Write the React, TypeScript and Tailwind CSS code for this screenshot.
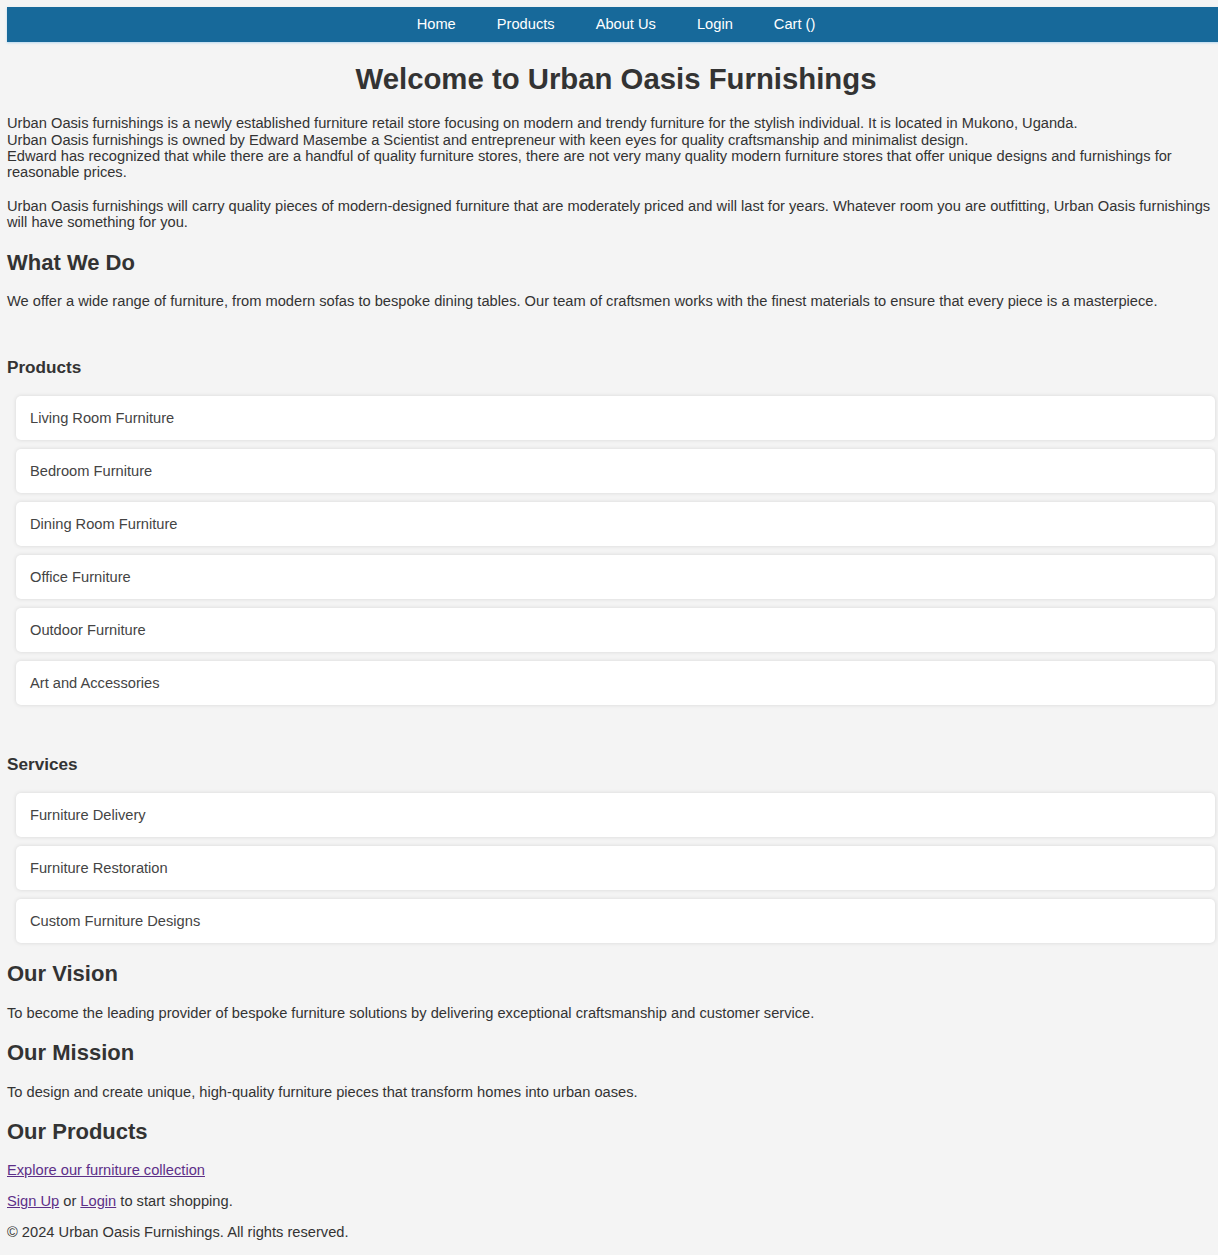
const products = [
  "Living Room Furniture",
  "Bedroom Furniture",
  "Dining Room Furniture",
  "Office Furniture",
  "Outdoor Furniture",
  "Art and Accessories",
];

const services = ["Furniture Delivery", "Furniture Restoration", "Custom Furniture Designs"];

const navLinks = ["Home", "Products", "About Us", "Login", "Cart ()"];

function Card({ label }: { label: string }) {
  return (
    <li className="ml-[9px] mr-[10px] flex h-[44px] items-center rounded-[5px] bg-white px-[14px] text-[#444] shadow-[0_0_4px_rgba(0,0,0,0.12)]">
      {label}
    </li>
  );
}

export default function App() {
  return (
    <div className="min-h-screen w-full overflow-hidden bg-[#f4f4f4] font-['Liberation_Sans',Arial,sans-serif] text-[14.67px] leading-[16.4px] text-[#333]">
      <div className="w-[1232px] px-[7px] pt-[7px] pb-[20px]">
        <nav className="flex h-[35px] items-center justify-center bg-[#17699a] shadow-[0_1px_2px_rgba(120,190,235,0.5)]">
          {navLinks.map((l) => (
            <a key={l} href="#" className="px-[20.5px] text-white">
              {l}
            </a>
          ))}
        </nav>

        <h1 className="mt-[19.6px] text-center text-[29.33px] font-bold leading-[34px]">
          Welcome to Urban Oasis Furnishings
        </h1>

        <p className="mt-[19.6px]">
          Urban Oasis furnishings is a newly established furniture retail store focusing on modern and trendy furniture for the stylish individual. It is located in Mukono, Uganda.
          <br />
          Urban Oasis furnishings is owned by Edward Masembe a Scientist and entrepreneur with keen eyes for quality craftsmanship and minimalist design.
          <br />
          Edward has recognized that while there are a handful of quality furniture stores, there are not very many quality modern furniture stores that offer unique designs and furnishings for reasonable prices.
        </p>
        <p className="mt-[17px]">
          Urban Oasis furnishings will carry quality pieces of modern-designed furniture that are moderately priced and will last for years. Whatever room you are outfitting, Urban Oasis furnishings will have something for you.
        </p>

        <h2 className="mt-[19px] text-[22px] font-bold leading-[25px]">What We Do</h2>
        <p className="mt-[18px]">
          We offer a wide range of furniture, from modern sofas to bespoke dining tables. Our team of craftsmen works with the finest materials to ensure that every piece is a masterpiece.
        </p>

        <h3 className="mt-[49px] text-[17.16px] font-bold leading-[19.4px]">Products</h3>
        <ul className="mt-[19px] flex flex-col gap-[9px]">
          {products.map((p) => (
            <Card key={p} label={p} />
          ))}
        </ul>

        <h3 className="mt-[49.5px] text-[17.16px] font-bold leading-[19.4px]">Services</h3>
        <ul className="mt-[18.5px] flex flex-col gap-[9px]">
          {services.map((s) => (
            <Card key={s} label={s} />
          ))}
        </ul>

        <h2 className="mt-[18.5px] text-[22px] font-bold leading-[25px]">Our Vision</h2>
        <p className="mt-[18.5px]">
          To become the leading provider of bespoke furniture solutions by delivering exceptional craftsmanship and customer service.
        </p>

        <h2 className="mt-[18.5px] text-[22px] font-bold leading-[25px]">Our Mission</h2>
        <p className="mt-[19px]">
          To design and create unique, high-quality furniture pieces that transform homes into urban oases.
        </p>

        <h2 className="mt-[19px] text-[22px] font-bold leading-[25px]">Our Products</h2>
        <p className="mt-[18px]">
          <a href="#" className="text-[#5d2f88] underline">
            Explore our furniture collection
          </a>
        </p>
        <p className="mt-[14.6px]">
          <a href="#" className="text-[#5d2f88] underline">
            Sign Up
          </a>{" "}
          or{" "}
          <a href="#" className="text-[#5d2f88] underline">
            Login
          </a>{" "}
          to start shopping.
        </p>
        <p className="mt-[14.6px]">© 2024 Urban Oasis Furnishings. All rights reserved.</p>
      </div>
    </div>
  );
}
